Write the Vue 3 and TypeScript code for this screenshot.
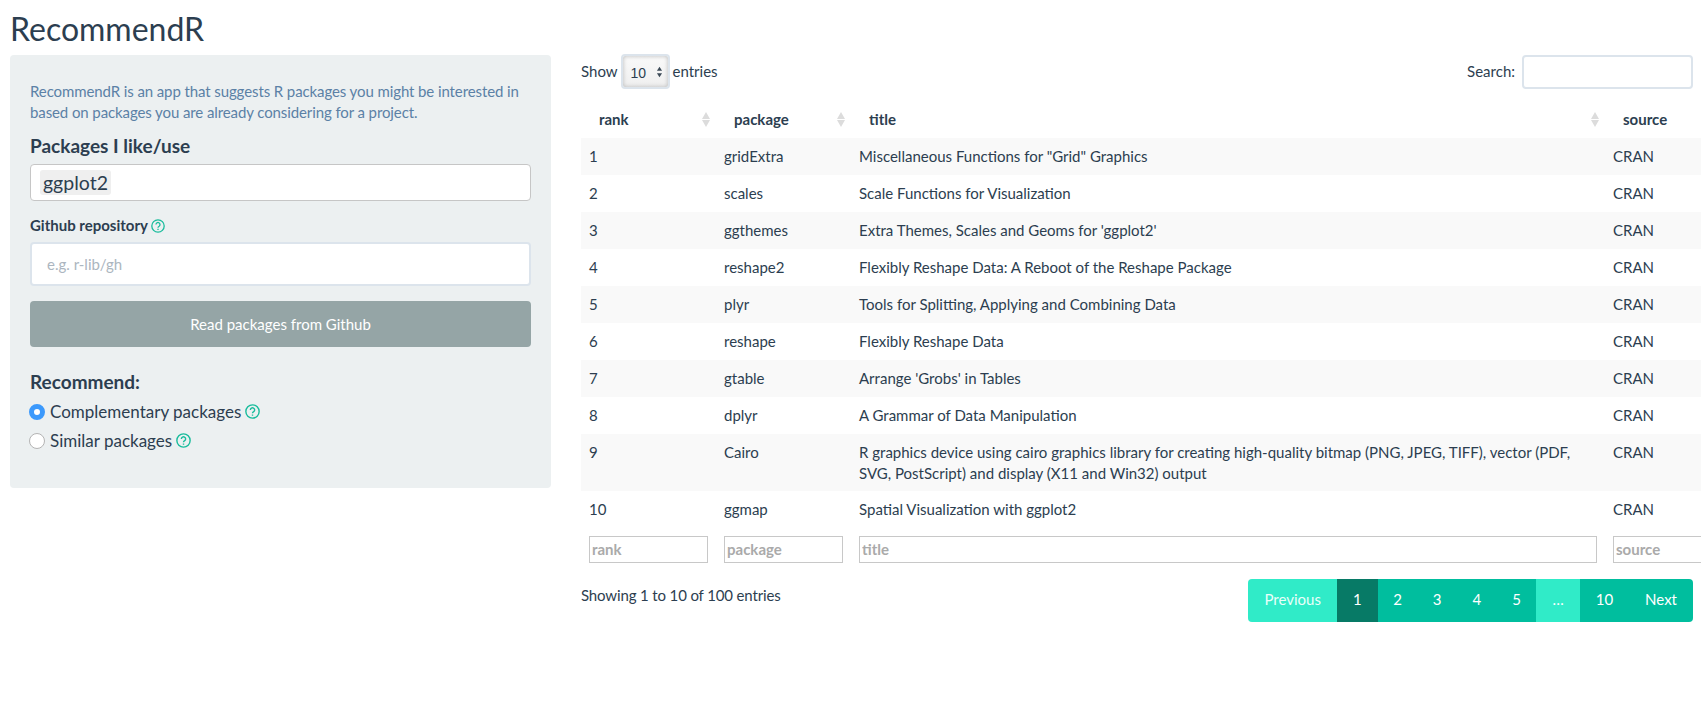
<script setup lang="ts">
interface Row {
  rank: number
  pkg: string
  title: string
}

const rows: Row[] = [
  { rank: 1, pkg: 'gridExtra', title: 'Miscellaneous Functions for "Grid" Graphics' },
  { rank: 2, pkg: 'scales', title: 'Scale Functions for Visualization' },
  { rank: 3, pkg: 'ggthemes', title: "Extra Themes, Scales and Geoms for 'ggplot2'" },
  { rank: 4, pkg: 'reshape2', title: 'Flexibly Reshape Data: A Reboot of the Reshape Package' },
  { rank: 5, pkg: 'plyr', title: 'Tools for Splitting, Applying and Combining Data' },
  { rank: 6, pkg: 'reshape', title: 'Flexibly Reshape Data' },
  { rank: 7, pkg: 'gtable', title: "Arrange 'Grobs' in Tables" },
  { rank: 8, pkg: 'dplyr', title: 'A Grammar of Data Manipulation' },
  { rank: 9, pkg: 'Cairo', title: 'R graphics device using cairo graphics library for creating high-quality bitmap (PNG, JPEG, TIFF), vector (PDF, SVG, PostScript) and display (X11 and Win32) output' },
  { rank: 10, pkg: 'ggmap', title: 'Spatial Visualization with ggplot2' },
]

const columns = ['rank', 'package', 'title', 'source']
const pages = [
  { label: 'Previous', state: 'off' },
  { label: '1', state: 'current' },
  { label: '2', state: 'num' },
  { label: '3', state: 'num' },
  { label: '4', state: 'num' },
  { label: '5', state: 'num' },
  { label: '…', state: 'off' },
  { label: '10', state: '' },
  { label: 'Next', state: '' },
]
</script>

<template>
  <div class="page">
    <h2 class="app-title">RecommendR</h2>
    <div class="layout">
      <aside class="sidebar">
        <p class="intro">RecommendR is an app that suggests R packages you might be interested in based on packages you are already considering for a project.</p>
        <h4 class="heading">Packages I like/use</h4>
        <div class="selectize"><span class="chip">ggplot2</span></div>
        <label class="field-label">
          Github repository
          <svg class="help" viewBox="0 0 14 14"><circle cx="7" cy="7" r="6.2" /><path d="M5 5.5a2 2 0 1 1 3.1 1.7c-.7.4-1.1.8-1.1 1.5M7 9.7v1.2" /></svg>
        </label>
        <input class="text-input" type="text" placeholder="e.g. r-lib/gh" />
        <button class="github-btn" type="button">Read packages from Github</button>
        <h4 class="heading recommend">Recommend:</h4>
        <div class="radio">
          <span class="dot checked"></span>
          <span>Complementary packages</span>
          <svg class="help big" viewBox="0 0 14 14"><circle cx="7" cy="7" r="6.2" /><path d="M5 5.5a2 2 0 1 1 3.1 1.7c-.7.4-1.1.8-1.1 1.5M7 9.7v1.2" /></svg>
        </div>
        <div class="radio">
          <span class="dot"></span>
          <span>Similar packages</span>
          <svg class="help big" viewBox="0 0 14 14"><circle cx="7" cy="7" r="6.2" /><path d="M5 5.5a2 2 0 1 1 3.1 1.7c-.7.4-1.1.8-1.1 1.5M7 9.7v1.2" /></svg>
        </div>
      </aside>

      <main class="main">
        <div class="top-bar">
          <div class="length">
            <span>Show</span>
            <span class="select-wrap">
              <select class="length-select"><option>10</option></select>
              <svg class="select-arrows" viewBox="0 0 8 14"><path d="M4 1l3 4.5H1zM4 13l3-4.5H1z" /></svg>
            </span>
            <span>entries</span>
          </div>
          <label class="search">Search: <input class="search-input" type="text" /></label>
        </div>

        <table class="grid">
          <colgroup>
            <col class="col-s" />
            <col class="col-s" />
            <col class="col-title" />
            <col class="col-s" />
          </colgroup>
          <thead>
            <tr>
              <th v-for="col in columns" :key="col">
                {{ col }}
                <svg v-if="col !== 'source'" class="sort" viewBox="0 0 8 15"><path d="M4 0l4 7H0zM4 15l4-7H0z" /></svg>
              </th>
            </tr>
          </thead>
          <tbody>
            <tr v-for="row in rows" :key="row.rank">
              <td>{{ row.rank }}</td>
              <td>{{ row.pkg }}</td>
              <td>{{ row.title }}</td>
              <td>CRAN</td>
            </tr>
          </tbody>
          <tfoot>
            <tr>
              <td v-for="col in columns" :key="col">
                <input class="filter" type="text" :placeholder="col" />
              </td>
            </tr>
          </tfoot>
        </table>

        <div class="bottom-bar">
          <div class="info">Showing 1 to 10 of 100 entries</div>
          <div class="pagination">
            <a v-for="p in pages" :key="p.label" class="page-link" :class="p.state">{{ p.label }}</a>
          </div>
        </div>
      </main>
    </div>
  </div>
</template>

<style scoped>
.page {
  width: 1701px;
  height: 712px;
  overflow: hidden;
  box-sizing: border-box;
  padding-left: 10px;
  background: #fff;
  color: #2c3e50;
  font-family: Lato, "Liberation Sans", sans-serif;
  font-size: 15px;
  line-height: 21px;
}

.app-title {
  margin: 0;
  height: 55px;
  padding-top: 10px;
  box-sizing: border-box;
  font-size: 32px;
  line-height: 38px;
  font-weight: 400;
}

.layout {
  display: flex;
  align-items: flex-start;
}

.sidebar {
  width: 541px;
  height: 433px;
  flex: none;
  box-sizing: border-box;
  padding: 26px 20px 0;
  background: #ecf0f1;
  border-radius: 4px;
}

.intro {
  margin: 0;
  color: #5b81a6;
  letter-spacing: -0.1px;
}

.heading {
  margin: 11px 0 0;
  font-size: 19px;
  line-height: 24px;
  font-weight: 700;
}

.selectize {
  display: flex;
  align-items: center;
  height: 37px;
  margin-top: 6px;
  box-sizing: border-box;
  padding-left: 9px;
  background: #fff;
  border: 1px solid #c6c6c6;
  border-radius: 4px;
}

.chip {
  padding: 2px 3px;
  background: #efefef;
  border-radius: 3px;
  font-size: 19.5px;
  line-height: 21px;
}

.field-label {
  display: flex;
  align-items: center;
  gap: 3px;
  margin-top: 14px;
  font-size: 15px;
  font-weight: 700;
}

.help {
  width: 14px;
  height: 14px;
  fill: none;
  stroke: #18bc9c;
  stroke-width: 1.3;
}

.help.big {
  width: 15px;
  height: 15px;
  margin-left: 4px;
}

.text-input {
  display: block;
  width: 100%;
  height: 44px;
  margin-top: 6px;
  box-sizing: border-box;
  padding: 0 15px;
  background: #fff;
  border: 2px solid #dce4ec;
  border-radius: 4px;
  color: #2c3e50;
  font: inherit;
}

.text-input::placeholder {
  color: #acb6c0;
}

.github-btn {
  display: block;
  width: 100%;
  height: 46px;
  margin-top: 15px;
  background: #95a5a6;
  border: 0;
  border-radius: 4px;
  color: #fff;
  font: inherit;
}

.recommend {
  margin-top: 23px;
  margin-bottom: 3px;
}

.radio {
  display: flex;
  align-items: center;
  height: 29px;
  font-size: 17px;
}

.dot {
  width: 16px;
  height: 16px;
  flex: none;
  margin-right: 5px;
  margin-left: -1px;
  box-sizing: border-box;
  background: #fff;
  border: 1px solid #b4b4b4;
  border-radius: 50%;
}

.dot.checked {
  background: #fff;
  border: 5px solid #3b99fc;
}

.main {
  width: 1112px;
  flex: none;
  margin-left: 30px;
}

.top-bar {
  display: flex;
  align-items: flex-start;
  justify-content: space-between;
  height: 47px;
}

.length {
  display: flex;
  align-items: center;
  gap: 3px;
  height: 35px;
  margin-top: -1px;
}

.select-wrap {
  position: relative;
  display: block;
  width: 49px;
  height: 35px;
}

.length-select {
  width: 100%;
  height: 100%;
  box-sizing: border-box;
  padding: 2px 0 0 8px;
  appearance: none;
  background: linear-gradient(#fafafa, #efefef);
  border: 2px solid #dce4ec;
  border-radius: 4px;
  box-shadow: inset 0 0 4px #b9b9b9;
  color: #2c3e50;
  font-family: "Liberation Sans", sans-serif;
  font-size: 14px;
}

.select-arrows {
  position: absolute;
  top: 12px;
  right: 7px;
  width: 7px;
  height: 12px;
  fill: #3c4a57;
  pointer-events: none;
}

.search {
  display: flex;
  align-items: center;
  gap: 7px;
  height: 34px;
  margin-top: -1px;
}

.search-input {
  width: 171px;
  height: 34px;
  margin-top: 1px;
  box-sizing: border-box;
  background: #fff;
  border: 2px solid #dce4ec;
  border-radius: 4px;
}

.grid {
  width: 1159px;
  table-layout: fixed;
  border-collapse: collapse;
}

.col-s {
  width: 135px;
}

.col-title {
  width: 754px;
}

.grid th {
  position: relative;
  height: 36px;
  box-sizing: border-box;
  padding: 7px 18px 8px;
  font-weight: 700;
  text-align: left;
}

.sort {
  position: absolute;
  top: 10px;
  right: 6px;
  width: 8px;
  height: 15px;
  fill: #dcdcdc;
}

.grid td {
  padding: 8px;
  vertical-align: top;
}

.grid tbody tr:nth-child(9) td {
  padding-bottom: 7px;
}

.grid tbody tr:nth-child(odd) {
  background: #f9f9f9;
}

.filter {
  display: block;
  width: 119px;
  height: 27px;
  box-sizing: border-box;
  padding: 0 2px 2px;
  background: #fff;
  border: 1px solid #c8c8c8;
  font: 700 15px Lato, "Liberation Sans", sans-serif;
}

.filter::placeholder {
  color: #aaa;
  opacity: 1;
}

.grid tfoot td:nth-child(3) .filter {
  width: 738px;
}

.bottom-bar {
  display: flex;
  align-items: flex-start;
  justify-content: space-between;
  margin-top: 8px;
}

.info {
  padding-top: 6px;
  letter-spacing: -0.14px;
}

.pagination {
  display: flex;
  height: 43px;
  overflow: hidden;
  border-radius: 4px;
}

.page-link {
  display: block;
  padding: 10px 16px;
  background: #00be9e;
  color: #fff;
}

.page-link.num {
  padding: 10px 15.5px;
}

.page-link.off {
  background: #30ebc8;
}

.page-link.off:first-child {
  color: #e9fffa;
}

.page-link.current {
  background: #077a66;
}
</style>
